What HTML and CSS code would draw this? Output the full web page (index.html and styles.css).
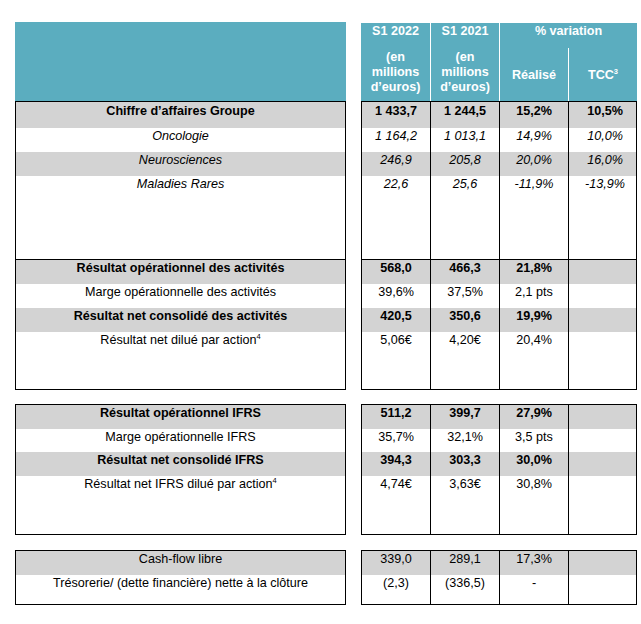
FILE: index.html
```html
<!DOCTYPE html>
<html lang="fr">
<head>
<meta charset="utf-8">
<title>Chiffres clés S1 2022</title>
<link rel="stylesheet" href="styles.css">
</head>
<body>
<div class="sheet">
  <div class="head">
    <div class="head-left"></div>
    <div class="head-right">
      <div class="hc r1">S1 2022</div>
      <div class="hc r1 hl">S1 2021</div>
      <div class="hc r1 hl span2">% variation</div>
      <div class="hc r2">(en<br>millions<br>d’euros)</div>
      <div class="hc r2 hl">(en<br>millions<br>d’euros)</div>
      <div class="hc r2 hl mid">Réalisé</div>
      <div class="hc r2 hl mid">TCC<sup>3</sup></div>
    </div>
  </div>

  <div class="block">
    <div class="box labels">
      <div class="row gray bold h26">Chiffre d’affaires Groupe</div>
      <div class="row italic h24">Oncologie</div>
      <div class="row gray italic h24">Neurosciences</div>
      <div class="row italic h83">Maladies Rares</div>
      <div class="row gray bold h24 sep">Résultat opérationnel des activités</div>
      <div class="row h24">Marge opérationnelle des activités</div>
      <div class="row gray bold h24">Résultat net consolidé des activités</div>
      <div class="row h57">Résultat net dilué par action<sup>4</sup></div>
    </div>
    <div class="box nums">
      <div class="row gray bold h26"><span>1 433,7</span><span>1 244,5</span><span>15,2%</span><span>10,5%</span></div>
      <div class="row italic h24"><span>1 164,2</span><span>1 013,1</span><span>14,9%</span><span>10,0%</span></div>
      <div class="row gray italic h24"><span>246,9</span><span>205,8</span><span>20,0%</span><span>16,0%</span></div>
      <div class="row italic h83"><span>22,6</span><span>25,6</span><span>-11,9%</span><span>-13,9%</span></div>
      <div class="row gray bold h24 sep"><span>568,0</span><span>466,3</span><span>21,8%</span><span></span></div>
      <div class="row h24"><span>39,6%</span><span>37,5%</span><span>2,1 pts</span><span></span></div>
      <div class="row gray bold h24"><span>420,5</span><span>350,6</span><span>19,9%</span><span></span></div>
      <div class="row h57"><span>5,06€</span><span>4,20€</span><span>20,4%</span><span></span></div>
    </div>
  </div>

  <div class="block b2">
    <div class="box labels">
      <div class="row gray bold h24">Résultat opérationnel IFRS</div>
      <div class="row h23">Marge opérationnelle IFRS</div>
      <div class="row gray bold h24">Résultat net consolidé IFRS</div>
      <div class="row h58">Résultat net IFRS dilué par action<sup>4</sup></div>
    </div>
    <div class="box nums">
      <div class="row gray bold h24"><span>511,2</span><span>399,7</span><span>27,9%</span><span></span></div>
      <div class="row h23"><span>35,7%</span><span>32,1%</span><span>3,5 pts</span><span></span></div>
      <div class="row gray bold h24"><span>394,3</span><span>303,3</span><span>30,0%</span><span></span></div>
      <div class="row h58"><span>4,74€</span><span>3,63€</span><span>30,8%</span><span></span></div>
    </div>
  </div>

  <div class="block b3">
    <div class="box labels">
      <div class="row gray h24">Cash-flow libre</div>
      <div class="row h29">Trésorerie/ (dette financière) nette à la clôture</div>
    </div>
    <div class="box nums">
      <div class="row gray h24"><span>339,0</span><span>289,1</span><span>17,3%</span><span></span></div>
      <div class="row h29"><span>(2,3)</span><span>(336,5)</span><span>-</span><span></span></div>
    </div>
  </div>
</div>
</body>
</html>
```

FILE: styles.css
```css
* {
  box-sizing: border-box;
  margin: 0;
  padding: 0;
}

body {
  margin: 0;
  background: #ffffff;
  font-family: "Liberation Sans", Arial, sans-serif;
  font-size: 12.6px;
  color: #000000;
}

.sheet {
  width: 641px;
  padding: 22px 0 0 15px;
}

.head {
  display: flex;
  gap: 15px;
}

.head-left {
  width: 331px;
  height: 79px;
  background: #5badbf;
}

.head-right {
  width: 276px;
  height: 78px;
  margin-top: 1px;
  background: #5badbf;
  display: grid;
  grid-template-columns: repeat(4, 69px);
  grid-template-rows: 25px 53px;
  color: #ffffff;
  font-weight: bold;
  text-align: center;
  line-height: 15px;
}

.hc.r1 {
  padding-top: 1px;
}

.hc.r2 {
  padding-top: 2px;
}

.hc.mid {
  padding-top: 20px;
}

.hc.hl {
  border-left: 1px solid #ffffff;
}

.hc.span2 {
  grid-column: span 2;
}

sup {
  font-size: 7.5px;
  line-height: 0;
  vertical-align: 5px;
}

.block {
  display: flex;
  gap: 15px;
}

.block.b2 {
  margin-top: 14px;
}

.block.b3 {
  margin-top: 15px;
}

.box {
  border: 1px solid #000000;
}

.labels {
  width: 331px;
}

.nums {
  width: 276px;
}

.row {
  line-height: 15px;
  padding-top: 1px;
  text-align: center;
  white-space: nowrap;
}

.nums .row {
  display: grid;
  grid-template-columns: 68px 69px 69px 68px;
  padding-top: 0;
}

.nums .row span {
  display: block;
  padding-top: 1px;
}

.nums .row span + span {
  border-left: 1px solid #000000;
}

.nums .row span:last-child {
  padding-left: 5px;
}

.gray {
  background: #d3d3d3;
}

.bold {
  font-weight: bold;
}

.italic {
  font-style: italic;
}

.sep {
  border-top: 1px solid #000000;
}

.h23 { height: 23px; }
.h24 { height: 24px; }
.h26 { height: 26px; }
.h26 { padding-top: 2px; }
.nums .h26 span { padding-top: 2px; }
.h29 { height: 29px; }
.h57 { height: 57px; }
.h58 { height: 58px; }
.h83 { height: 83px; }
.sep.h24 { height: 25px; }
```
